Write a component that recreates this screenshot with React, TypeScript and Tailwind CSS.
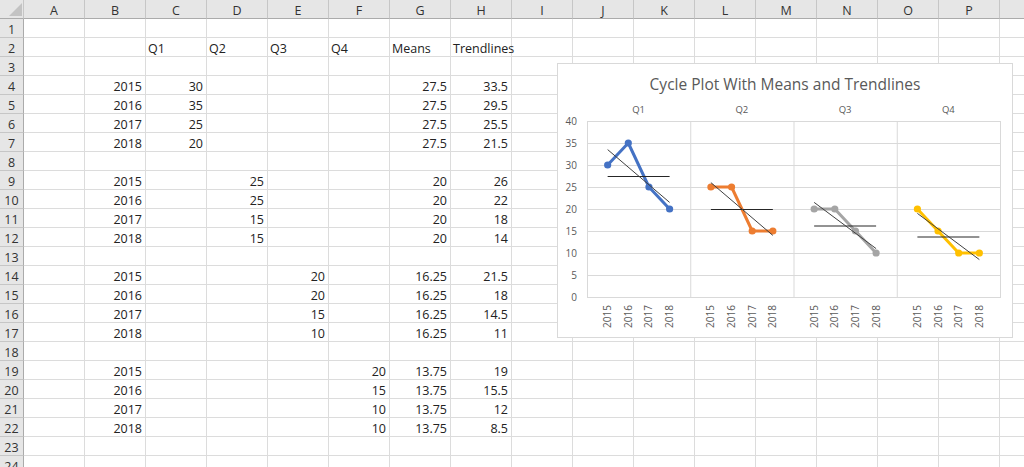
import React from "react";

const COLS = ["A","B","C","D","E","F","G","H","I","J","K","L","M","N","O","P"];

const DATA: Record<number, Record<string, string>> = {
  2: { C: "Q1", D: "Q2", E: "Q3", F: "Q4", G: "Means", H: "Trendlines" },
  4: { B: "2015", C: "30", G: "27.5", H: "33.5" },
  5: { B: "2016", C: "35", G: "27.5", H: "29.5" },
  6: { B: "2017", C: "25", G: "27.5", H: "25.5" },
  7: { B: "2018", C: "20", G: "27.5", H: "21.5" },
  9: { B: "2015", D: "25", G: "20", H: "26" },
  10: { B: "2016", D: "25", G: "20", H: "22" },
  11: { B: "2017", D: "15", G: "20", H: "18" },
  12: { B: "2018", D: "15", G: "20", H: "14" },
  14: { B: "2015", E: "20", G: "16.25", H: "21.5" },
  15: { B: "2016", E: "20", G: "16.25", H: "18" },
  16: { B: "2017", E: "15", G: "16.25", H: "14.5" },
  17: { B: "2018", E: "10", G: "16.25", H: "11" },
  19: { B: "2015", F: "20", G: "13.75", H: "19" },
  20: { B: "2016", F: "15", G: "13.75", H: "15.5" },
  21: { B: "2017", F: "10", G: "13.75", H: "12" },
  22: { B: "2018", F: "10", G: "13.75", H: "8.5" },
};

const SERIES = [
  { color: "#4472C4", values: [30, 35, 25, 20], mean: 27.5, trend: [33.5, 21.5] },
  { color: "#ED7D31", values: [25, 25, 15, 15], mean: 20, trend: [26, 14] },
  { color: "#A5A5A5", values: [20, 20, 15, 10], mean: 16.25, trend: [21.5, 11] },
  { color: "#FFC000", values: [20, 15, 10, 10], mean: 13.75, trend: [19, 8.5] },
];

const PL = 587;
const PR = 1000;
const PT = 121;
const PB = 297;
const PW = (PR - PL) / 4;
const STEP = PW / 5;
const yv = (v: number) => PB - v * 4.4;
const xp = (p: number, i: number) => PL + PW * p + STEP * (i + 1);

function Chart() {
  const grid = [0, 5, 10, 15, 20, 25, 30, 35, 40];
  const years = ["2015", "2016", "2017", "2018"];
  const font = "'Open Sans', 'Noto Sans', sans-serif";
  return (
    <div className="absolute left-[557px] top-[63px] w-[456px] h-[275px] border border-[#d9d9d9] bg-white">
      <svg width={454} height={273} viewBox="558 64 454 273" style={{ fontFamily: font }}>
        <text x={785} y={90} textAnchor="middle" fontSize={15.5} fill="#595959">
          Cycle Plot With Means and Trendlines
        </text>
        {["Q1", "Q2", "Q3", "Q4"].map((q, p) => (
          <text key={q} x={PL + PW * p + PW / 2} y={113} textAnchor="middle" fontSize={9.5} fill="#595959">
            {q}
          </text>
        ))}
        {grid.map((g) => (
          <g key={g}>
            <line x1={PL} x2={PR} y1={yv(g) + 0.5} y2={yv(g) + 0.5} stroke="#d9d9d9" strokeWidth={1} />
            <text x={577} y={yv(g) + 4} textAnchor="end" fontSize={10} fill="#595959">
              {g}
            </text>
          </g>
        ))}
        {[0, 1, 2, 3, 4].map((p) => (
          <line key={p} x1={PL + PW * p + 0.5} x2={PL + PW * p + 0.5} y1={PT} y2={PB + 1} stroke="#d9d9d9" strokeWidth={1} />
        ))}
        {SERIES.map((s, p) => (
          <g key={p}>
            {years.map((y, i) => (
              <text
                key={y}
                x={xp(p, i) + 3.5}
                y={305}
                textAnchor="end"
                fontSize={10}
                fill="#595959"
                transform={`rotate(-90 ${xp(p, i) + 3.5} 305)`}
              >
                {y}
              </text>
            ))}
            <polyline
              points={s.values.map((v, i) => `${xp(p, i)},${yv(v)}`).join(" ")}
              fill="none"
              stroke={s.color}
              strokeWidth={3}
              strokeLinejoin="round"
            />
            {s.values.map((v, i) => (
              <circle key={i} cx={xp(p, i)} cy={yv(v)} r={3.6} fill={s.color} />
            ))}
            <line x1={xp(p, 0)} x2={xp(p, 3)} y1={yv(s.mean) + 0.5} y2={yv(s.mean) + 0.5} stroke="#262626" strokeWidth={1} />
            <line x1={xp(p, 0)} x2={xp(p, 3)} y1={yv(s.trend[0])} y2={yv(s.trend[1])} stroke="#404040" strokeWidth={1} />
          </g>
        ))}
      </svg>
    </div>
  );
}

export default function App() {
  const rows = Array.from({ length: 24 }, (_, i) => i + 1);
  return (
    <div
      className="relative w-[1024px] h-[467px] overflow-hidden bg-white text-[12.5px] text-[#222]"
      style={{ fontFamily: "'Open Sans', 'Noto Sans', sans-serif" }}
    >
      <div className="grid grid-cols-[24px_repeat(16,61px)_24px] auto-rows-[19px]">
        <div className="relative bg-[#e6e6e6] border-r border-b border-r-[#c6c6c6] border-b-[#ababab]">
          <svg className="absolute left-[9px] top-[3px]" width={13} height={13} viewBox="0 0 13 13">
            <polygon points="13,0 13,13 0,13" fill="#c3c3c3" />
          </svg>
        </div>
        {COLS.map((c) => (
          <div
            key={c}
            className="bg-[#e6e6e6] border-r border-b border-r-[#c6c6c6] border-b-[#ababab] text-center pt-[3px] leading-[15px] text-[#333]"
          >
            {c}
          </div>
        ))}
        <div className="bg-[#e6e6e6] border-b border-b-[#ababab]" />
        {rows.map((r) => (
          <React.Fragment key={r}>
            <div className="bg-[#e6e6e6] border-r border-b border-r-[#ababab] border-b-[#c6c6c6] text-center pt-[3px] leading-[15px] text-[#333]">
              {r}
            </div>
            {COLS.map((c) => {
              const v = DATA[r]?.[c];
              const isNum = v !== undefined && /^[0-9.]+$/.test(v);
              return (
                <div
                  key={c}
                  className={`border-r border-b border-[#dcdcdc] pt-[3px] leading-[15px] whitespace-nowrap ${
                    isNum ? "text-right pr-[3px]" : "text-left pl-[2px]"
                  }`}
                >
                  {v ?? ""}
                </div>
              );
            })}
            <div className="border-b border-[#dcdcdc]" />
          </React.Fragment>
        ))}
      </div>
      <Chart />
    </div>
  );
}
